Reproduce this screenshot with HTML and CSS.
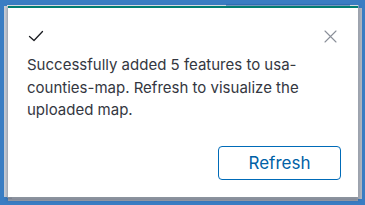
FILE: index.html
```html
<!DOCTYPE html>
<html>
<head>
<meta charset="utf-8">
<link rel="stylesheet" href="styles.css">
</head>
<body>
<div class="stage">
  <div class="backdrop-line"></div>
  <div class="backdrop-line mid"></div>
  <div class="backdrop-line right"></div>
  <div class="toast">
    <div class="toast-header">
      <svg class="check" width="16" height="16" viewBox="0 0 16 16"><path d="M1.5 8.5 L6 12.5 L14.5 3.5" fill="none" stroke="#1a1c21" stroke-width="1.3" stroke-linecap="round" stroke-linejoin="round"/></svg>
      <svg class="close" width="13" height="13" viewBox="0 0 13 13"><path d="M1 1 L12 12 M12 1 L1 12" fill="none" stroke="#8a8f99" stroke-width="1.1" stroke-linecap="round"/></svg>
    </div>
    <p class="toast-body">Successfully added 5 features to usa-counties-map. Refresh to visualize the uploaded map.</p>
    <div class="toast-actions">
      <button class="btn">Refresh</button>
    </div>
  </div>
</div>
</body>
</html>
```
FILE: styles.css
```css
html, body {
  margin: 0;
  padding: 0;
}
body {
  background: #3a7dc3;
  width: 365px;
  height: 205px;
  overflow: hidden;
  font-family: Inter, "Noto Sans", sans-serif;
}
.stage {
  position: relative;
  padding: 6px 0 0 8px;
}
.backdrop-line {
  position: absolute;
  left: 7px;
  top: 5px;
  width: 219px;
  height: 1px;
  background: #ffffff;
}
.backdrop-line.mid {
  left: 226px;
  top: 4px;
  width: 124px;
  height: 2px;
  background: #2f70b6;
}
.backdrop-line.right {
  left: 350px;
  width: 8px;
}
.toast {
  position: relative;
  width: 350px;
  height: 189px;
  box-sizing: content-box;
  background: #ffffff;
  border-top: 2px solid #017d73;
  box-shadow: 0 2px 3px 1px rgba(40, 50, 70, 0.35), 0 0 0 1px rgba(200, 205, 213, 0.5), -4px 0 0 0 #c9ced6, 4px 2px 0 0 #b3b8c0, 0 4px 0 0 #a1a6b0;
  display: flex;
  flex-direction: column;
}
.toast-header {
  display: flex;
  justify-content: space-between;
  align-items: center;
  height: 24px;
  margin-top: 16px;
  padding: 0 21px 0 20px;
}
.check {
  display: block;
}
.close {
  display: block;
}
.toast-body {
  margin: 6px 0 0 0;
  padding: 0 28px 0 19px;
  font-size: 15px;
  line-height: 22.5px;
  color: #343741;
}
.toast-actions {
  display: flex;
  justify-content: flex-end;
  padding: 24px 17px 0 0;
}
.btn {
  width: 123px;
  height: 34px;
  border: 1px solid #006bb8;
  border-radius: 4px;
  background: #ffffff;
  color: #0061a6;
  font-family: Inter, "Noto Sans", sans-serif;
  font-size: 17px;
  font-weight: 400;
}
```
